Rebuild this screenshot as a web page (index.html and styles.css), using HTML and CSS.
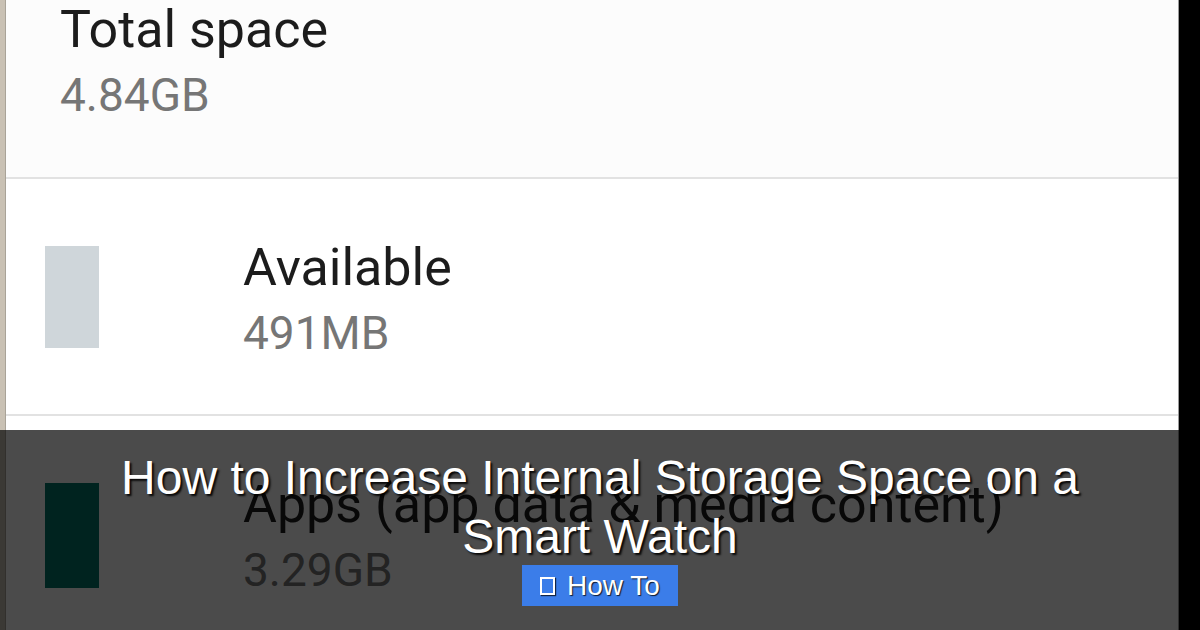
FILE: index.html
```html
<!DOCTYPE html>
<html>
<head>
<meta charset="utf-8">
<link rel="stylesheet" href="styles.css">
</head>
<body>
<div class="screen">
  <div class="edge"></div>
  <div class="panel">
    <div class="row row-total">
      <div class="texts">
        <div class="primary">Total space</div>
        <div class="secondary">4.84GB</div>
      </div>
    </div>
    <div class="row row-item">
      <div class="swatch swatch-free"></div>
      <div class="texts">
        <div class="primary">Available</div>
        <div class="secondary">491MB</div>
      </div>
    </div>
    <div class="row row-item row-last">
      <div class="swatch swatch-apps"></div>
      <div class="texts">
        <div class="primary">Apps (app data &amp; media content)</div>
        <div class="secondary">3.29GB</div>
      </div>
    </div>
  </div>
  <div class="strip"></div>
</div>
<div class="overlay">
  <h1 class="title">How to Increase Internal Storage Space on a<br>Smart Watch</h1>
  <div class="badge"><span class="tofu"></span>How To</div>
</div>
</body>
</html>
```
FILE: styles.css
```css
html, body {
  margin: 0;
  padding: 0;
}
body {
  width: 1200px;
  height: 630px;
  overflow: hidden;
  position: relative;
  background: #000;
  font-family: Roboto, "Liberation Sans", sans-serif;
}
.screen {
  display: flex;
  height: 630px;
}
.edge {
  width: 6px;
  background: #c9c1b4;
  border-right: 1px solid #a9a398;
  box-sizing: border-box;
}
.panel {
  width: 1173px;
  background: #fff;
  border-right: 1px solid #9a9a9a;
  box-sizing: border-box;
  display: flex;
  flex-direction: column;
}
.strip {
  flex: 1;
  background: #000;
}
.row {
  display: flex;
  align-items: flex-start;
  border-bottom: 2px solid #e2e2e2;
  box-sizing: border-box;
}
.row-total {
  height: 179px;
  padding-left: 54px;
  background: #fcfcfc;
}
.row-item {
  height: 237px;
  padding-left: 39px;
}
.row-last {
  flex: 1;
  border-bottom: none;
}
.texts {
  display: flex;
  flex-direction: column;
  gap: 7px;
}
.row-item .texts {
  margin-top: 59px;
  margin-left: 144px;
}
.primary {
  font-size: 52px;
  line-height: 60px;
  color: #1c1c1c;
}
.secondary {
  font-size: 46px;
  line-height: 56px;
  color: #767676;
}
.swatch {
  width: 54px;
  height: 102px;
  margin-top: 67px;
}
.swatch-free {
  background: #cfd6da;
}
.swatch-apps {
  background: #00796b;
  height: 105px;
}
.overlay {
  position: absolute;
  left: 0;
  right: 0;
  bottom: 0;
  height: 200px;
  background: rgba(0, 0, 0, 0.705);
  display: flex;
  flex-direction: column;
  align-items: center;
  padding-top: 18px;
  box-sizing: border-box;
}
.title {
  margin: 0;
  font-family: "Liberation Sans", Arial, sans-serif;
  font-weight: normal;
  font-size: 48px;
  line-height: 59px;
  color: #fff;
  text-align: center;
  text-shadow: 2px 2px 2px rgba(0, 0, 0, 0.9);
}
.badge {
  margin-top: -1px;
  height: 41px;
  box-sizing: border-box;
  padding: 0 18px 0 18px;
  background: #3b7de9;
  display: flex;
  align-items: center;
  gap: 12px;
  font-family: "Liberation Sans", Arial, sans-serif;
  font-size: 28px;
  color: #fff;
  text-shadow: 1px 1px 1px rgba(0, 0, 0, 0.8);
}
.tofu {
  width: 15px;
  height: 18px;
  border: 2px solid #fff;
  box-sizing: border-box;
  box-shadow: 1px 1px 1px rgba(0, 0, 0, 0.7);
}
```
